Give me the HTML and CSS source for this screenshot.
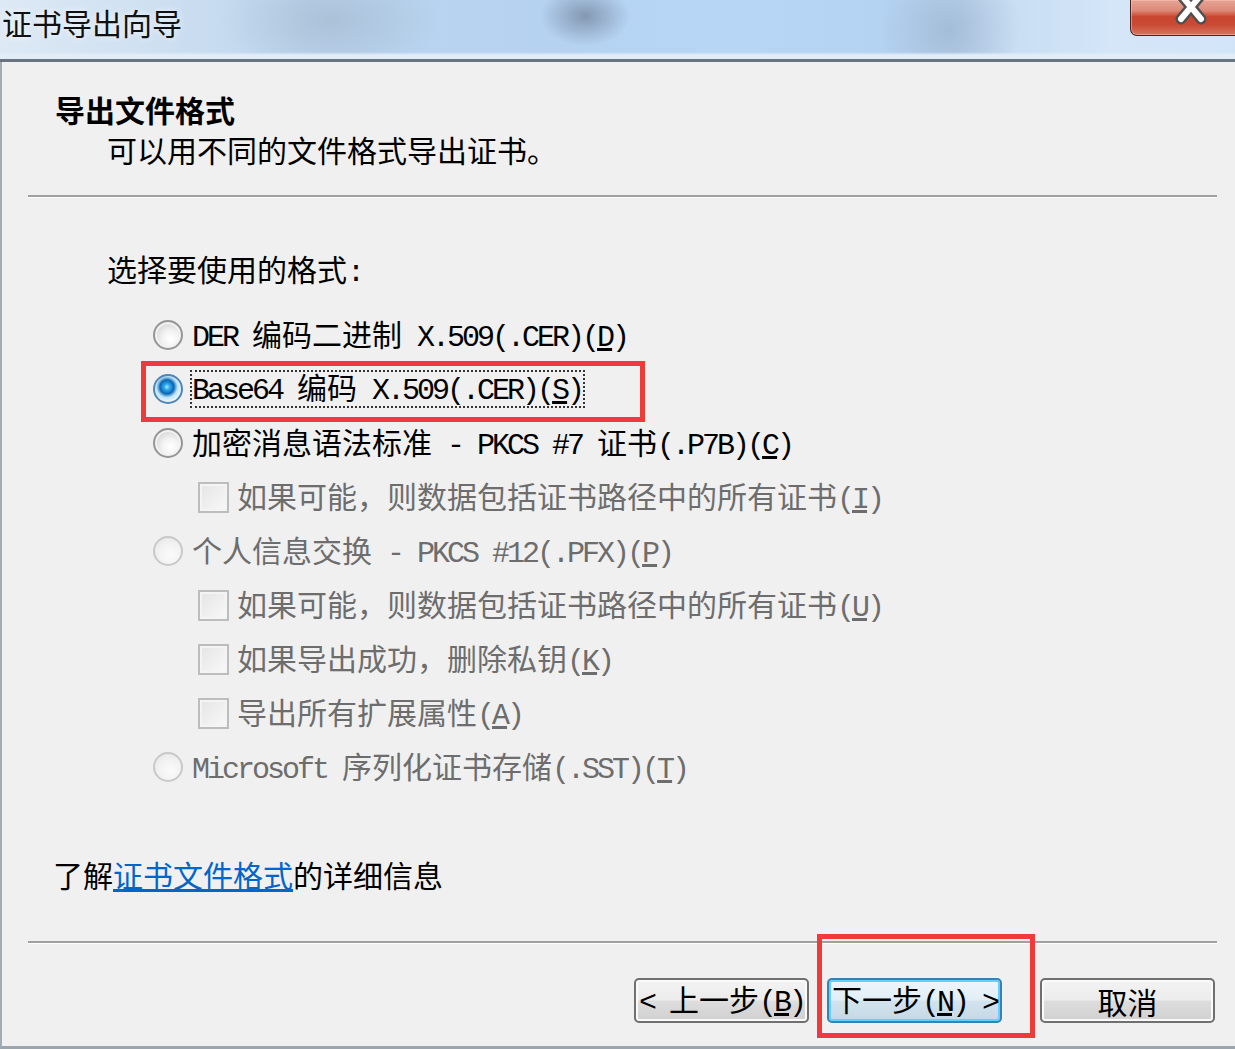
FILE: index.html
```html
<!DOCTYPE html>
<html lang="zh-CN">
<head>
  <meta charset="UTF-8">
  <title>证书导出向导</title>
  <link rel="stylesheet" href="styles.css">
</head>
<body>
<div class="window">
  <div class="titlebar">
    <div class="caption">证书导出向导</div>
    <div class="close">
      <svg width="110" height="36" viewBox="0 0 110 36">
        <path d="M50 -5 L70 19 M70 -5 L50 19" stroke="#505050" stroke-width="11" stroke-linecap="round" fill="none"/>
        <path d="M50 -5 L70 19 M70 -5 L50 19" stroke="#ffffff" stroke-width="6" stroke-linecap="round" fill="none"/>
      </svg>
    </div>
  </div>

  <div class="client">
    <div class="header">
      <div class="heading">导出文件格式</div>
      <div class="subheading">可以用不同的文件格式导出证书。</div>
    </div>
    <div class="sep"></div>

    <div class="prompt">选择要使用的格式<span class="en">:</span></div>
    <div class="options">
      <div class="row">
        <span class="radio"></span>
        <span class="label"><span class="en">DER </span>编码二进制<span class="en"> X.509(.CER)(<u>D</u>)</span></span>
      </div>
      <div class="row marked">
        <span class="mark"></span>
        <span class="radio on"></span>
        <span class="label focus"><span class="en">Base64 </span>编码<span class="en"> X.509(.CER)(<u>S</u>)</span></span>
      </div>
      <div class="row">
        <span class="radio"></span>
        <span class="label">加密消息语法标准<span class="en"> - PKCS #7 </span>证书<span class="en">(.P7B)(<u>C</u>)</span></span>
      </div>
      <div class="row sub off">
        <span class="check"></span>
        <span class="label">如果可能，则数据包括证书路径中的所有证书<span class="en">(<u>I</u>)</span></span>
      </div>
      <div class="row off">
        <span class="radio"></span>
        <span class="label">个人信息交换<span class="en"> - PKCS #12(.PFX)(<u>P</u>)</span></span>
      </div>
      <div class="row sub off">
        <span class="check"></span>
        <span class="label">如果可能，则数据包括证书路径中的所有证书<span class="en">(<u>U</u>)</span></span>
      </div>
      <div class="row sub off">
        <span class="check"></span>
        <span class="label">如果导出成功，删除私钥<span class="en">(<u>K</u>)</span></span>
      </div>
      <div class="row sub off">
        <span class="check"></span>
        <span class="label">导出所有扩展属性<span class="en">(<u>A</u>)</span></span>
      </div>
      <div class="row off">
        <span class="radio"></span>
        <span class="label"><span class="en">Microsoft </span>序列化证书存储<span class="en">(.SST)(<u>T</u>)</span></span>
      </div>
    </div>

    <div class="more">了解<a href="#">证书文件格式</a>的详细信息</div>
    <div class="sep lower"></div>

    <div class="buttons">
      <div class="btn"><span class="text"><span class="en">&lt; </span>上一步<span class="en">(<u>B</u>)</span></span></div>
      <div class="btn next"><span class="mark"></span><span class="text">下一步<span class="en">(<u>N</u>) &gt;</span></span></div>
      <div class="btn cancel"><span class="text">取消</span></div>
    </div>
  </div>
</div>
</body>
</html>
```

FILE: styles.css
```css
body {
  margin: 0;
  background: #f0f0f0;
  font-family: "Noto Sans CJK SC", sans-serif;
  font-size: 30px;
  color: #000;
  overflow: hidden;
}

.window {
  width: 1235px;
  height: 1049px;
  overflow: hidden;
}

/* title bar */
.titlebar {
  height: 59px;
  display: flex;
  align-items: flex-start;
  border-bottom: 3px solid #68747f;
  background:
    linear-gradient(180deg, rgba(255,255,255,0) 0, rgba(255,255,255,0) 52px, #e2edf8 55px, #e2edf8 59px),
    radial-gradient(ellipse 45px 30px at 585px 16px, rgba(90,105,125,0.55), rgba(90,105,125,0)),
    radial-gradient(ellipse 110px 60px at 330px 20px, rgba(150,170,190,0.45), rgba(150,170,190,0)),
    radial-gradient(ellipse 70px 80px at 950px 30px, rgba(140,165,195,0.55), rgba(140,165,195,0)),
    linear-gradient(90deg, #dde9f5 0, #cfe0f1 12%, #bcd5ee 25%, #b5d2f1 45%, #b7d6f6 60%, #b4d2f1 72%, #c6dcf2 80%, #d4e6f8 90%, #d2e4f7 100%);
}

.caption {
  padding-left: 2px;
  line-height: 44px;
  font-size: 30px;
  color: #111;
  text-shadow: 0 0 6px rgba(255,255,255,0.9);
}

.close {
  margin-left: auto;
  width: 110px;
  height: 36px;
  margin-right: -5px;
  box-sizing: border-box;
  border: 1px solid #46241c;
  border-top: none;
  border-radius: 0 0 0 7px;
  background: linear-gradient(180deg, #e7a395 0, #dc8a78 30%, #c9452e 48%, #c94a34 70%, #d8735f 100%);
  box-shadow: inset 0 0 0 1px rgba(255,200,190,0.5);
}

.close svg {
  display: block;
}

/* client area */
.client {
  height: 984px;
  border-left: 2px solid #a2abb6;
  border-bottom: 3px solid #9ca5ae;
}

.header {
  padding: 27px 0 0 53px;
}

.heading {
  font-weight: bold;
  line-height: 40px;
}

.subheading {
  padding-left: 52px;
  line-height: 40px;
}

.sep {
  height: 2px;
  margin: 26px 18px 0 26px;
  background: #a0a0a0;
  border-bottom: 1px solid #ffffff;
}

.sep.lower {
  margin-top: 47px;
}

.prompt {
  margin-top: 50px;
  padding-left: 105px;
  line-height: 40px;
}

.en {
  font-family: "Liberation Mono", monospace;
  letter-spacing: -3px;
}

.options {
  margin-top: 15px;
  padding-left: 151px;
}

.row {
  height: 54px;
  display: flex;
  align-items: center;
  line-height: 40px;
  white-space: nowrap;
}

.row.sub {
  padding-left: 45px;
}

.row.off {
  color: #6d6d6d;
}

.marked {
  position: relative;
}

.mark {
  position: absolute;
  border: 5px solid #ef3a3a;
  pointer-events: none;
}

.marked .mark {
  left: -12px;
  top: -1px;
  width: 494px;
  height: 51px;
}

.radio {
  flex: none;
  width: 30px;
  height: 30px;
  margin-right: 9px;
  box-sizing: border-box;
  border-radius: 50%;
  border: 2px solid #969696;
  background: radial-gradient(circle at 60% 65%, #ffffff 0, #f3f3f3 35%, #d6d6d6 75%, #e6e6e6 100%);
  box-shadow: inset 0 0 0 2px #f2f2f2;
}

.radio.on {
  border-color: #4f86b6;
  background: radial-gradient(circle at 46% 42%, #a8ecff 0, #2eaaf0 14%, #0d63ae 34%, #4b9ad2 40%, #c3e5f9 52%, #eaf6fd 72%, #b5d8ef 100%);
  box-shadow: none;
}

.row.off .radio {
  border-color: #c9c9c9;
  background: radial-gradient(circle at 60% 65%, #fbfbfb 0, #f2f2f2 50%, #e4e4e4 100%);
  box-shadow: none;
}

.check {
  flex: none;
  width: 31px;
  height: 31px;
  margin-right: 8px;
  box-sizing: border-box;
  border: 2px solid #bdbdbd;
  background: linear-gradient(135deg, #e4e4e4, #f9f9f9);
  box-shadow: inset 0 0 0 2px #f4f4f4;
}

.focus {
  margin-left: -2px;
  border: 2px dotted #333;
  line-height: 29px;
  padding-right: 1px;
}

.more {
  margin-top: 60px;
  padding-left: 51px;
  line-height: 40px;
}

.more a {
  color: #0066cc;
  text-decoration: underline;
}

/* buttons */
.buttons {
  display: flex;
  justify-content: flex-end;
  margin-top: 34px;
  padding-right: 20px;
}

.btn {
  width: 175px;
  height: 45px;
  box-sizing: border-box;
  display: flex;
  align-items: center;
  justify-content: center;
  white-space: nowrap;
  line-height: 40px;
  border: 2px solid #707070;
  border-radius: 5px;
  background: linear-gradient(180deg, #f3f3f3 0, #ececec 48%, #dddddd 52%, #d0d0d0 100%);
  box-shadow: inset 0 0 0 2px #fafafa;
}

.btn .text {
  white-space: pre;
}

.btn.next {
  position: relative;
  margin-left: 18px;
  border-color: #3c7fb1;
  background: linear-gradient(180deg, #eef6fb 0, #e2eef6 48%, #d2e3ee 52%, #c6d8e4 100%);
  box-shadow: inset 0 0 0 2px #5fd2ff;
}

.btn.next .mark {
  left: -12px;
  top: -46px;
  width: 208px;
  height: 94px;
}

.btn.cancel {
  margin-left: 38px;
}
```
